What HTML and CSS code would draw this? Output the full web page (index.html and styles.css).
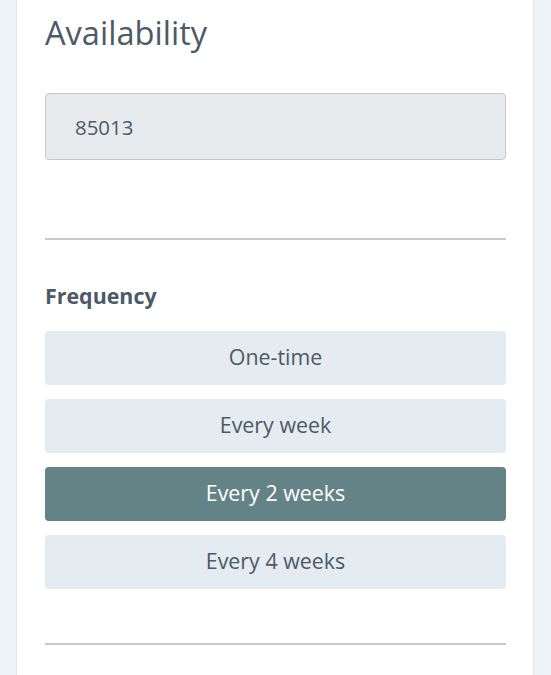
FILE: index.html
```html
<!DOCTYPE html>
<html>

<head>
    <link rel="stylesheet" href="styles.css">
</head>

<body>
    <div class='card'>
        <h1 class='title'>Availability</h1>
        <input class='zip' type='text' value='85013'>
        <hr>
        <h3 class='label'>Frequency</h3>
        <div class='options'>
            <button class='option'>One-time</button>
            <button class='option'>Every week</button>
            <button class='option active'>Every 2 weeks</button>
            <button class='option'>Every 4 weeks</button>
        </div>
        <hr>
    </div>
</body>

</html>
```

FILE: styles.css
```css
body {
    font-family: "Open Sans", sans-serif;
    background: #eef3f7;
    margin: 0;
    padding: 0 16px;
    color: #4d5a66;
}

.card {
    background: white;
    border-left: 1px solid #e3e7eb;
    border-right: 1px solid #e3e7eb;
    width: 518px;
    padding: 13px 27px 40px 28px;
    box-sizing: border-box;
    min-height: 675px;
}

.title {
    font-size: 32.6px;
    font-weight: normal;
    line-height: 1.2;
    margin: 0 0 41px;
}

.zip {
    display: block;
    width: 100%;
    box-sizing: border-box;
    height: 67px;
    padding: 0 29px;
    font-family: inherit;
    font-size: 20.4px;
    color: #4d5a66;
    background: #e8ebee;
    border: 1px solid #c6c9cc;
    border-radius: 4px;
    margin: 0 0 78px;
}

hr {
    margin: 0;
    border: none;
    border-top: 2px solid #c9c9c9;
}

.label {
    font-size: 21.4px;
    font-weight: bold;
    line-height: 1.2;
    margin: 43px 0 22px;
}

.options {
    display: flex;
    flex-direction: column;
    gap: 14px;
    margin-bottom: 54px;
}

.option {
    height: 54px;
    padding: 0 0 2px;
    border: none;
    border-radius: 4px;
    background: #e4ebf1;
    color: #4d5a66;
    font-family: inherit;
    font-size: 21.4px;
    cursor: pointer;
}

.option.active {
    background: #648387;
    color: white;
}
```
